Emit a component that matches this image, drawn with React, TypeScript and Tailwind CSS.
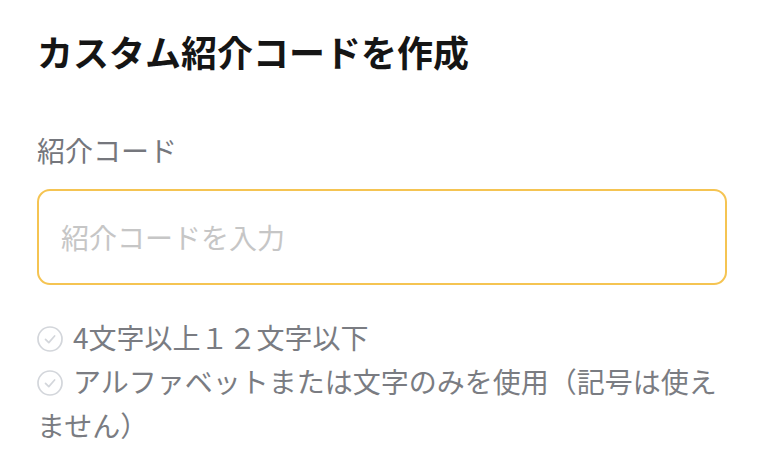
import React from "react";

function CheckIcon() {
  return (
    <svg
      width="26"
      height="26"
      viewBox="0 0 26 26"
      className="inline-block align-middle mr-[10px] -mt-[4px]"
    >
      <circle cx="13" cy="13" r="12" fill="none" stroke="#d3d6db" strokeWidth="1.7" />
      <path d="M8.5 13.3 L11.8 16.6 L17.6 10" fill="none" stroke="#d3d6db" strokeWidth="1.7" strokeLinecap="round" strokeLinejoin="round" />
    </svg>
  );
}

export default function App() {
  const font = { fontFamily: '"Noto Sans CJK JP", "Noto Sans", sans-serif' };
  return (
    <div className="w-[766px] h-[468px] bg-white overflow-hidden" style={font}>
      <div className="pl-[37px] pr-[39px] pt-[24px]">
        <h1 className="text-[36px] leading-[54px] font-bold text-[#151515]">
          カスタム紹介コードを作成
        </h1>
        <div className="mt-[52px] text-[28px] leading-[40px] text-[#75777d]">
          紹介コード
        </div>
        <div className="mt-[19px] h-[96px] border-2 border-[#f5c452] rounded-[13px] flex items-center px-[22px]">
          <span className="text-[28px] text-[#c6c6c6]">紹介コードを入力</span>
        </div>
        <div className="mt-[30px] text-[28px] leading-[44px] text-[#7a7c82]">
          <p>
            <CheckIcon />
            4文字以上１２文字以下
          </p>
          <p>
            <CheckIcon />
            アルファベットまたは文字のみを使用（記号は使えません）
          </p>
        </div>
      </div>
    </div>
  );
}
